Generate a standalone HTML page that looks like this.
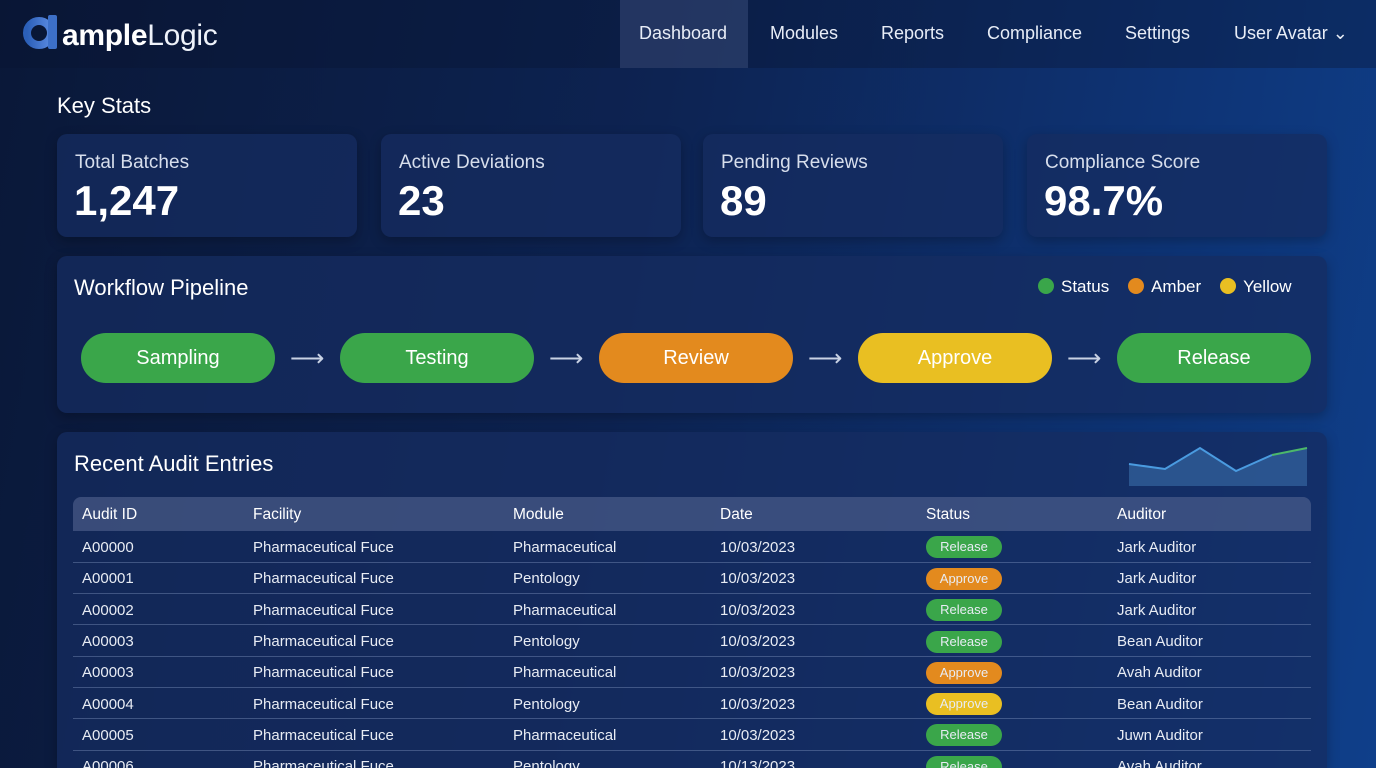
<!DOCTYPE html><html><head><style>
*{margin:0;padding:0;box-sizing:border-box}
html,body{width:1376px;height:768px;overflow:hidden}
body{font-family:"Liberation Sans",sans-serif;color:#fff;background:linear-gradient(100deg,#0a1838 0%,#0d2352 45%,#0e3476 80%,#0f3f8a 100%);position:relative}
.nav{position:absolute;top:0;left:0;right:0;height:68px;background:rgba(8,20,50,.35)}
.logo{position:absolute;left:22px;top:14px;font-size:30px;letter-spacing:-0.3px;white-space:nowrap}
.nav a{position:absolute;top:0;height:68px;line-height:66px;font-size:18px;color:#e8edf7}
.card{position:absolute;background:rgba(22,44,96,.75);border-radius:10px;box-shadow:0 4px 12px rgba(0,0,0,.25)}
.stat .l{position:absolute;left:18px;top:18px;font-size:19px;color:#d7deec}
.stat .v{position:absolute;left:17px;top:43px;font-size:42px;font-weight:bold}
.pill{position:absolute;top:333px;width:194px;height:50px;border-radius:25px;text-align:center;line-height:50px;font-size:20px}
.g{background:#3aa64a}.o{background:#e38a1e}.y{background:#e9bf22}
.arr{position:absolute;top:344px;font-size:24px;color:#c9d2e4}
.dot{display:inline-block;width:16px;height:16px;border-radius:50%;vertical-align:-2px;margin-right:7px}
table{position:absolute;left:73px;top:497px;width:1238px;border-collapse:collapse;font-size:15px}
th{background:rgba(90,105,150,.55);height:34px;text-align:left;font-weight:normal;font-size:15.5px;padding-left:9px;padding-top:2px}
th:first-child{border-radius:8px 0 0 0}th:last-child{border-radius:0 8px 0 0}
td{height:31.3px;border-bottom:1px solid rgba(150,170,210,.35);padding-left:9px;padding-top:2px;color:#e8ecf4}
.b{display:inline-block;width:76px;height:22px;border-radius:11px;text-align:center;line-height:22px;font-size:13px}
</style></head><body>
<div class="nav">
<div class="logo"><svg width="40" height="36" viewBox="0 0 40 36" style="vertical-align:-5px"><defs><linearGradient id="lg" x1="0" x2="1"><stop offset="0" stop-color="#2b5fb8"/><stop offset="1" stop-color="#5a8ae0"/></linearGradient></defs><circle cx="17" cy="19" r="12" fill="none" stroke="url(#lg)" stroke-width="8"/><rect x="26" y="1" width="9" height="34" rx="2" fill="#3d70c8"/></svg><b>ample</b><span style="color:#eef2fa">Logic</span></div>
<div style="position:absolute;left:620px;top:0;width:128px;height:68px;background:rgba(80,100,150,.35)"></div>
<a style="left:639px">Dashboard</a><a style="left:770px">Modules</a><a style="left:881px">Reports</a><a style="left:987px">Compliance</a><a style="left:1125px">Settings</a><a style="left:1234px">User Avatar &#8964;</a>
</div>
<div style="position:absolute;left:57px;top:93px;font-size:22px">Key Stats</div>
<div class="card stat" style="left:57px;top:134px;width:300px;height:103px"><div class="l">Total Batches</div><div class="v">1,247</div></div>
<div class="card stat" style="left:381px;top:134px;width:300px;height:103px"><div class="l">Active Deviations</div><div class="v">23</div></div>
<div class="card stat" style="left:703px;top:134px;width:300px;height:103px"><div class="l">Pending Reviews</div><div class="v">89</div></div>
<div class="card stat" style="left:1027px;top:134px;width:300px;height:103px"><div class="l">Compliance Score</div><div class="v">98.7%</div></div>
<div class="card" style="left:57px;top:256px;width:1270px;height:157px"></div>
<div style="position:absolute;left:74px;top:275px;font-size:22px">Workflow Pipeline</div>
<div style="position:absolute;left:1038px;top:277px;font-size:17px"><span class="dot g"></span>Status&nbsp;&nbsp;&nbsp;&nbsp;<span class="dot o"></span>Amber&nbsp;&nbsp;&nbsp;&nbsp;<span class="dot y"></span>Yellow</div>
<div class="pill g" style="left:81px">Sampling</div><div class="arr" style="left:290px">⟶</div>
<div class="pill g" style="left:340px">Testing</div><div class="arr" style="left:549px">⟶</div>
<div class="pill o" style="left:599px">Review</div><div class="arr" style="left:808px">⟶</div>
<div class="pill y" style="left:858px">Approve</div><div class="arr" style="left:1067px">⟶</div>
<div class="pill g" style="left:1117px">Release</div>
<div class="card" style="left:57px;top:432px;width:1270px;height:336px;border-radius:10px 10px 0 0"></div>
<div style="position:absolute;left:74px;top:451px;font-size:22px">Recent Audit Entries</div>
<svg style="position:absolute;left:0;top:0" width="1376" height="768"><polygon points="1129,464 1165,469 1200,448 1236,471 1272,455 1307,448 1307,486 1129,486" fill="rgba(70,130,190,.45)"/><polyline points="1129,464 1165,469 1200,448 1236,471 1272,455" fill="none" stroke="#4a9be0" stroke-width="2"/><polyline points="1272,455 1307,448" fill="none" stroke="#4cb86a" stroke-width="2"/></svg>
<table>
<tr><th style="width:171px">Audit ID</th><th style="width:260px">Facility</th><th style="width:207px">Module</th><th style="width:206px">Date</th><th style="width:191px">Status</th><th>Auditor</th></tr>
<tr><td>A00000</td><td>Pharmaceutical Fuce</td><td>Pharmaceutical</td><td>10/03/2023</td><td><span class="b g">Release</span></td><td>Jark Auditor</td></tr>
<tr><td>A00001</td><td>Pharmaceutical Fuce</td><td>Pentology</td><td>10/03/2023</td><td><span class="b o">Approve</span></td><td>Jark Auditor</td></tr>
<tr><td>A00002</td><td>Pharmaceutical Fuce</td><td>Pharmaceutical</td><td>10/03/2023</td><td><span class="b g">Release</span></td><td>Jark Auditor</td></tr>
<tr><td>A00003</td><td>Pharmaceutical Fuce</td><td>Pentology</td><td>10/03/2023</td><td><span class="b g">Release</span></td><td>Bean Auditor</td></tr>
<tr><td>A00003</td><td>Pharmaceutical Fuce</td><td>Pharmaceutical</td><td>10/03/2023</td><td><span class="b o">Approve</span></td><td>Avah Auditor</td></tr>
<tr><td>A00004</td><td>Pharmaceutical Fuce</td><td>Pentology</td><td>10/03/2023</td><td><span class="b y">Approve</span></td><td>Bean Auditor</td></tr>
<tr><td>A00005</td><td>Pharmaceutical Fuce</td><td>Pharmaceutical</td><td>10/03/2023</td><td><span class="b g">Release</span></td><td>Juwn Auditor</td></tr>
<tr><td>A00006</td><td>Pharmaceutical Fuce</td><td>Pentology</td><td>10/13/2023</td><td><span class="b g">Release</span></td><td>Avah Auditor</td></tr>
</table>
</body></html>
